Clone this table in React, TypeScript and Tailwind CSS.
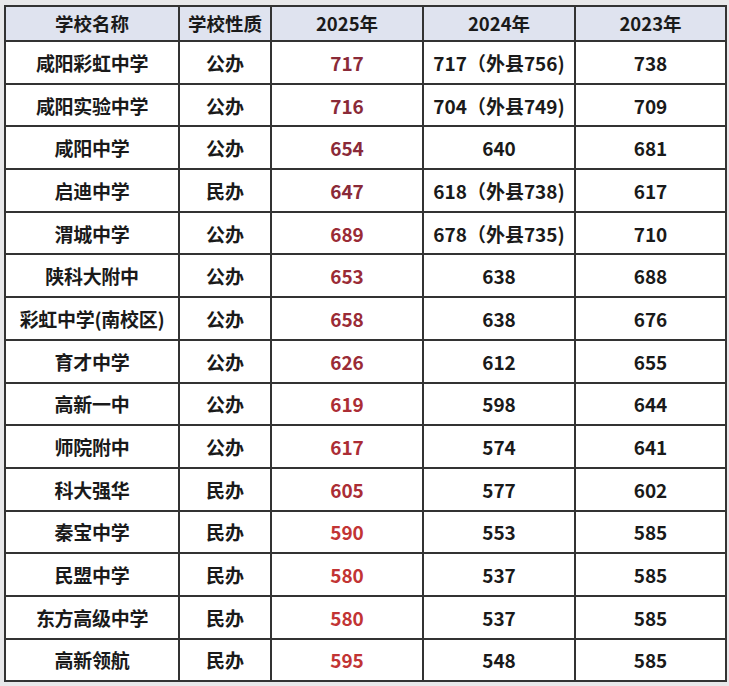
import React from 'react';

type Row = [string, string, string, string, string];

const rows: Row[] = [
  ['咸阳彩虹中学', '公办', '717', '717（外县756)', '738'],
  ['咸阳实验中学', '公办', '716', '704（外县749)', '709'],
  ['咸阳中学', '公办', '654', '640', '681'],
  ['启迪中学', '民办', '647', '618（外县738)', '617'],
  ['渭城中学', '公办', '689', '678（外县735)', '710'],
  ['陕科大附中', '公办', '653', '638', '688'],
  ['彩虹中学(南校区)', '公办', '658', '638', '676'],
  ['育才中学', '公办', '626', '612', '655'],
  ['高新一中', '公办', '619', '598', '644'],
  ['师院附中', '公办', '617', '574', '641'],
  ['科大强华', '民办', '605', '577', '602'],
  ['秦宝中学', '民办', '590', '553', '585'],
  ['民盟中学', '民办', '580', '537', '585'],
  ['东方高级中学', '民办', '580', '537', '585'],
  ['高新领航', '民办', '595', '548', '585'],
];

// 2025 column goes from maroon at the top to a brighter red at the bottom
const redFor = (i: number) => {
  if (i < 4) return 'text-[#8a2a38]';
  if (i < 8) return 'text-[#9a2b36]';
  if (i < 11) return 'text-[#ab2d35]';
  return 'text-[#c23434]';
};

const headers = ['学校名称', '学校性质', '2025年', '2024年', '2023年'];
const widths = ['w-[174px]', 'w-[92px]', 'w-[152px]', 'w-[152px]', 'w-[151px]'];

const cell = 'border-2 border-[#333] text-center text-[19px] leading-none';

export default function App() {
  return (
    <div
      className="w-[729px] h-[686px] bg-[#e8e8ea] pt-[5px] pl-[4px]"
      style={{ fontFamily: '"Noto Sans CJK SC", "Noto Sans", sans-serif' }}
    >
      <table className="border-collapse bg-white text-[#1a1a1a] font-bold">
        <thead>
          <tr className="h-[35px] bg-[#dfe3ef]">
            {headers.map((h, i) => (
              <th
                key={h}
                className={`${widths[i]} border-2 border-[#333] text-[18.5px] font-bold text-center leading-none`}
              >
                {h}
              </th>
            ))}
          </tr>
        </thead>
        <tbody>
          {rows.map((r, i) => (
            <tr key={r[0]} className="h-[42.7px]">
              <td className={`${cell} tracking-[-0.3px]`}>{r[0]}</td>
              <td className={cell}>{r[1]}</td>
              <td className={`${cell} ${redFor(i)}`}>{r[2]}</td>
              <td className={cell}>{r[3]}</td>
              <td className={cell}>{r[4]}</td>
            </tr>
          ))}
        </tbody>
      </table>
    </div>
  );
}
